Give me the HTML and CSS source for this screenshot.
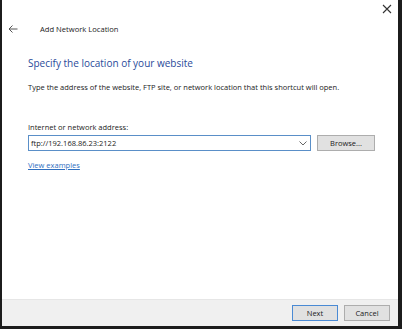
FILE: index.html
```html
<!DOCTYPE html>
<html>
<head>
<meta charset="utf-8">
<link rel="stylesheet" href="styles.css">
</head>
<body>
<div class="window">
  <div class="titlebar">
    <svg class="close" width="10" height="10" viewBox="0 0 10 10"><path d="M1 1L9 9M9 1L1 9" stroke="#333" stroke-width="1.1" fill="none"/></svg>
  </div>
  <div class="nav">
    <svg class="back" width="10" height="8" viewBox="0 0 10 8"><path d="M9.5 4H1M4.5 0.5L1 4L4.5 7.5" stroke="#555" stroke-width="1" fill="none"/></svg>
    <span class="navtitle">Add Network Location</span>
  </div>
  <div class="content">
    <h1 class="heading">Specify the location of your website</h1>
    <p class="desc">Type the address of the website, FTP site, or network location that this shortcut will open.</p>
    <div class="label">Internet or network address:</div>
    <div class="inputrow">
      <div class="combo">
        <span class="value">ftp://192.168.86.23:2122</span>
        <svg class="chev" width="8" height="5" viewBox="0 0 8 5"><path d="M0.5 0.5L4 4L7.5 0.5" stroke="#555" stroke-width="0.9" fill="none"/></svg>
      </div>
      <div class="btn browse">Browse...</div>
    </div>
    <a class="link">View examples</a>
  </div>
  <div class="footer">
    <div class="btn primary">Next</div>
    <div class="btn">Cancel</div>
  </div>
</div>
</body>
</html>
```
FILE: styles.css
```css
html, body {
  margin: 0;
  padding: 0;
  background: #ffffff;
}
.window {
  width: 396px;
  height: 326px;
  border-left: 2px solid #1c1c1c;
  border-right: 4px solid #1c1c1c;
  border-bottom: 3px solid #1c1c1c;
  display: flex;
  flex-direction: column;
  font-family: "Open Sans", "Noto Sans", sans-serif;
  color: #1a1a1a;
  background: #fff;
}
.titlebar {
  height: 14px;
  display: flex;
  justify-content: flex-end;
  align-items: flex-end;
  padding-right: 6px;
}
.close {
  display: block;
}
.nav {
  display: flex;
  align-items: center;
  height: 30px;
  padding-left: 6px;
}
.back {
  display: block;
}
.navtitle {
  margin-left: 22px;
  font-size: 7.6px;
  color: #222;
}
.content {
  padding-left: 26px;
  display: flex;
  flex-direction: column;
  align-items: flex-start;
}
.heading {
  margin: 11px 0 0 0;
  font-size: 10px;
  font-weight: normal;
  color: #2a4a9a;
  line-height: 16px;
}
.desc {
  margin: 11px 0 0 0;
  font-size: 7.5px;
  line-height: 10px;
}
.label {
  margin-top: 30px;
  font-size: 7.5px;
  line-height: 10px;
}
.inputrow {
  margin-top: 3px;
  display: flex;
  align-items: center;
}
.combo {
  width: 276px;
  height: 14px;
  border: 1px solid #5a8fc8;
  display: flex;
  align-items: center;
  justify-content: space-between;
  padding: 0 3px 0 2px;
  box-sizing: content-box;
}
.value {
  font-size: 7.5px;
}
.chev {
  display: block;
}
.btn {
  width: 56px;
  height: 14px;
  border: 1px solid #adadad;
  background: #e1e1e1;
  font-size: 7.5px;
  display: flex;
  align-items: center;
  justify-content: center;
}
.browse {
  margin-left: 6px;
}
.link {
  margin-top: 9px;
  font-size: 7.5px;
  color: #2f6fbf;
  text-decoration: underline;
  line-height: 10px;
}
.footer {
  margin-top: auto;
  height: 26px;
  background: #f0f0f0;
  border-top: 1px solid #e6e6e6;
  display: flex;
  justify-content: flex-end;
  align-items: center;
  gap: 6px;
  padding-right: 8px;
}
.footer .btn {
  width: 44px;
}
.primary {
  border-color: #4a8ad4;
}
```
